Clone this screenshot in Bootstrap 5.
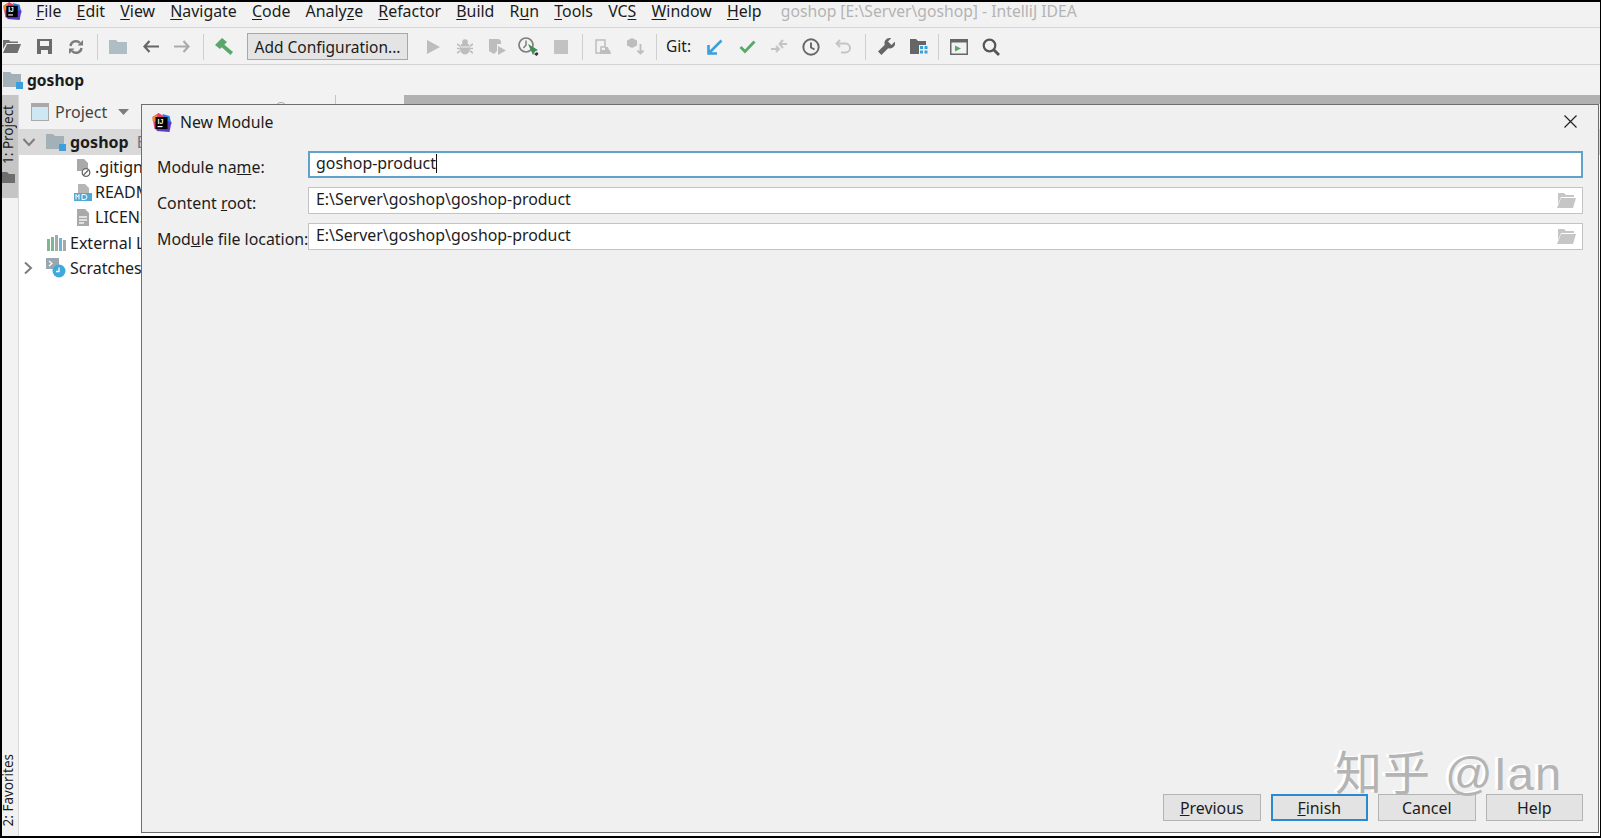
<!DOCTYPE html>
<html lang="en">
<head>
<meta charset="utf-8">
<title>goshop - IntelliJ IDEA</title>
<link href="https://cdn.jsdelivr.net/npm/bootstrap@5.3.0/dist/css/bootstrap.min.css" rel="stylesheet">
<style>
html,body{height:100%;overflow:hidden}
body{background:#000;font-family:"Noto Sans","Open Sans",sans-serif;font-size:16px;color:#1c1c1c;padding:2px 1px 2px 2px}
.ide{width:1598px;height:834px;background:#f2f2f2;position:relative;display:flex;flex-direction:column}
.menubar{height:26px;flex:none;border-bottom:1px solid #d6d6d6;gap:15.2px;font-size:15.9px;line-height:19px;padding-bottom:6px}
.logo-slot{width:34px;margin-right:-15.2px}
.menu-item{white-space:nowrap;color:#1c1c1c}
.menu-item u{text-underline-offset:2px;text-decoration-thickness:1px}
.win-title{color:#b4b4b4;margin-left:4px;font-size:15.7px}
.toolbar{height:37px;border-bottom:1px solid #d3d3d3;padding-top:1px;flex:none}
.tb-icon{width:32px;height:35px;display:flex;align-items:center;justify-content:center;flex:none}
.tb-icon.first{margin-left:-6px}
.tb-icon svg{display:block}
.tb-sep{width:1px;height:26px;background:#cfcfcf;flex:none;margin:0 4.5px}
.tb-sep.far{margin-left:6px}
.tb-sep.near{margin:0 3.5px}
.cfg-btn{height:27px;width:161px;border:1px solid #a8a8a8;background:#e4e4e4;border-radius:0;font-size:15.5px;line-height:24px;padding:0;color:#1c1c1c;margin:0 9px 0 7px;flex:none}
.git-label{width:32px;margin:0 1px 0 5px;font-size:15.5px;flex:none}
.navstrip{height:30px;flex:none;padding:1px 0 0 1px;font-weight:700;font-size:15.6px;gap:4px}
.workbench{flex:1;min-height:0;display:flex}
.side-rail{width:17px;flex:none;border-right:1px solid #d9d9d9;display:flex;flex-direction:column;justify-content:space-between;font-size:13.5px}
.rail-active{background:#c5c5c5;height:103px;display:flex;flex-direction:column;align-items:center;padding:10px 3px 0 0}
.rail-text{writing-mode:vertical-rl;transform:rotate(180deg);line-height:13px;white-space:nowrap}
.rail-fav{padding:0 3px 10px 0;display:flex;justify-content:center}
.tool-pane{flex:1;display:flex;flex-direction:column;min-width:0}
.pane-top{height:34px;flex:none;display:flex}
.pane-head{width:385px;position:relative;padding-left:12px;padding-bottom:1px;gap:6px;color:#444}
.pane-tick{position:absolute;left:316px;top:0;width:1px;height:9px;background:#c4c4c4}
.pane-arc{position:absolute;left:256px;top:7px;width:12px;height:12px;border-radius:50%;border:1px solid #a8a8a8}
.pane-grey{flex:1;background:#b1b1b1;height:9px}
.tree{flex:1;background:#fff;font-size:16px}
.tree-row{height:25px;white-space:nowrap;padding-left:27px;gap:4px}
.tree-row.sel{height:26px;background:#d9d9d9;font-weight:700}
.tree-row.indent{padding-left:55px;gap:3px}
.tree-row.indent span{position:relative;top:-1px}
.tree-chev{position:absolute}
.dlg{position:absolute;left:139px;top:102px;width:1458px;height:729px;background:#f0f0f0;border:1px solid #6e6e6e;display:flex;flex-direction:column}
.dlg-head{height:36px;padding:0 21px 0 9px;gap:8px;font-size:15.8px;flex:none}
.dlg-close{background:none;border:0;padding:0 0 3px;line-height:0}
.dlg-body{flex:1;padding:10px 15px 0 15px;display:flex;flex-direction:column;gap:9px}
.field-label{width:151px;flex:none;padding-top:6px;font-size:15.9px;white-space:nowrap;line-height:21px}
.field-box{position:relative;flex:1;height:27px;border:1px solid #c3c3c3;border-radius:0;padding:0 7px;font-size:15.9px;line-height:23px;background:#fff;color:#1c1c1c;box-shadow:none}
.field-box.on{border:2px solid #5fa3cb;padding:0 6px;line-height:21px}
.caret-bar{display:inline-block;width:1px;height:19px;background:#111;vertical-align:-4px}
.field-box svg{position:absolute;right:6px;top:5px}
.dlg-foot{padding:0 15px 11px 0;gap:10px;justify-content:flex-end}
.dlg-btn{width:97.5px;height:27px;border:1px solid #b4b4b4;border-radius:0;background:#e3e3e3;padding:0;font-size:15.9px;line-height:24px;color:#1c1c1c}
.dlg-btn.dflt{border:2px solid #2a8acb;line-height:22px}
.wmark{position:absolute;left:1333px;top:744px;font-size:47px;line-height:56px;color:#b4b4b4;font-family:"Liberation Sans","Noto Sans CJK SC",sans-serif;text-shadow:-3px -1px 0 #fff;white-space:nowrap;letter-spacing:1px;pointer-events:none}
</style>
</head>
<body>
<div class="ide">
  <div class="menubar d-flex align-items-center">
    <div class="logo-slot d-flex align-items-center">
      <svg width="20" height="19" viewBox="0 0 20 20"><path d="M1 4 7 0 12 3 8 18 3 16Z" fill="#e23f6e"/><path d="M1 4 6 1 5 9 1 8Z" fill="#f08a3a"/><path d="M11 1 18 3 20 11 14 14Z" fill="#2a7de1"/><path d="M8 8 20 9 18 19 5 18Z" fill="#5a3bc4"/><rect x="4" y="4" width="12" height="12" fill="#000"/><text x="6" y="11" font-size="7" font-weight="700" fill="#fff" font-family="Liberation Sans">IJ</text><rect x="6" y="13" width="5" height="1.200" fill="#fff"/></svg>
    </div>
    <span class="menu-item"><u>F</u>ile</span>
    <span class="menu-item"><u>E</u>dit</span>
    <span class="menu-item"><u>V</u>iew</span>
    <span class="menu-item"><u>N</u>avigate</span>
    <span class="menu-item"><u>C</u>ode</span>
    <span class="menu-item">Analy<u>z</u>e</span>
    <span class="menu-item"><u>R</u>efactor</span>
    <span class="menu-item"><u>B</u>uild</span>
    <span class="menu-item">R<u>u</u>n</span>
    <span class="menu-item"><u>T</u>ools</span>
    <span class="menu-item">VC<u>S</u></span>
    <span class="menu-item"><u>W</u>indow</span>
    <span class="menu-item"><u>H</u>elp</span>
    <span class="menu-item win-title">goshop [E:\Server\goshop] - IntelliJ IDEA</span>
  </div>
  <div class="toolbar d-flex align-items-center">
    <span class="tb-icon first"><svg width="18" height="13" viewBox="0 0 18 13"><path d="M0 0h6l1.500 1.500H15V3H3.500L0 9Z" fill="#707070"/><path d="M4 4h14l-3.500 9H0Z" fill="#707070"/></svg></span>
    <span class="tb-icon"><svg width="15" height="15" viewBox="0 0 15 15"><path fill-rule="evenodd" d="M0 0h15v15H0ZM3 2v5h9V2ZM4 11v4h7v-4Z" fill="#6b6b6b"/></svg></span>
    <span class="tb-icon"><svg width="16" height="16" viewBox="0 0 16 16"><path d="M2.500 7a5.500 5.500 0 0 1 9.500-3M13.500 9a5.500 5.500 0 0 1-9.500 3" fill="none" stroke="#7b7b7b" stroke-width="2.400"/><path d="M15 1v5.500H9.500ZM1 15V9.500h5.500Z" fill="#7b7b7b"/></svg></span>
    <span class="tb-sep"></span>
    <span class="tb-icon"><svg width="18" height="14" viewBox="0 0 18 14"><path d="M0 0h7l2 2h9v12H0Z" fill="#afbdc4"/></svg></span>
    <span class="tb-icon"><svg width="17" height="13" viewBox="0 0 17 13"><path d="M17 6.500H3M7.500 1 2.500 6.500 7.500 12" fill="none" stroke="#666" stroke-width="2.200"/></svg></span>
    <span class="tb-icon"><svg width="17" height="13" viewBox="0 0 17 13"><path d="M0 6.500h14M9.500 1l5 5.500-5 5.500" fill="none" stroke="#ababab" stroke-width="2.200"/></svg></span>
    <span class="tb-sep"></span>
    <span class="tb-icon"><svg width="19" height="17" viewBox="0 0 19 17"><path d="M0 7 7 0l5 4-7 7Z" fill="#59a869"/><path d="M5 3l13 11-2.500 3L3 6Z" fill="#59a869"/></svg></span>
    <button type="button" class="btn cfg-btn">Add Configuration...</button>
    <span class="tb-icon"><svg width="13" height="14" viewBox="0 0 13 14"><path d="M0 0 13 7 0 14Z" fill="#bdbdbd"/></svg></span>
    <span class="tb-icon"><svg width="16" height="16" viewBox="0 0 16 16"><ellipse cx="8" cy="9.500" rx="5" ry="6" fill="#bdbdbd"/><circle cx="8" cy="3" r="2.800" fill="#bdbdbd"/><path d="M0 5l3 2M16 5l-3 2M0 9.500h3M16 9.500h-3M0 14l3-2M16 14l-3-2" stroke="#bdbdbd" stroke-width="1.600"/><path d="M4 8h8" stroke="#f2f2f2"/></svg></span>
    <span class="tb-icon"><svg width="17" height="16" viewBox="0 0 17 16"><path d="M0 0h10l2 2v3H8v7l-3 3-5-3Z" fill="#bdbdbd"/><path d="M9 7l8 4.500L9 16Z" fill="#bdbdbd"/></svg></span>
    <span class="tb-icon"><svg width="22" height="20" viewBox="0 0 22 20"><circle cx="8" cy="8" r="7" fill="none" stroke="#7f7f7f" stroke-width="1.700"/><path d="M8 3.500V8l-2.500 3" fill="none" stroke="#7f7f7f" stroke-width="1.500"/><path d="M10 7l10 6-3 1.500L15 18Z" fill="#3f8f55"/><path d="M16 17l3-2 1.500 2-2 2Z" fill="#333"/></svg></span>
    <span class="tb-icon"><svg width="14" height="14" viewBox="0 0 14 14"><rect width="14" height="14" fill="#c2c2c2"/></svg></span>
    <span class="tb-sep"></span>
    <span class="tb-icon"><svg width="16" height="16" viewBox="0 0 16 16"><path d="M1 1h9v7H6v6H1Z" fill="none" stroke="#bdbdbd" stroke-width="1.500"/><path d="M5 11h10l1 4H5ZM10 8h3l1 3h-4Z" fill="#bdbdbd"/></svg></span>
    <span class="tb-icon"><svg width="19" height="17" viewBox="0 0 19 17"><path d="M6 0l5 2.500v5L6 10 1 7.500v-5Z" fill="#bdbdbd"/><path d="M14.500 6v9M11.500 12.500l3 3 3-3" fill="none" stroke="#bdbdbd" stroke-width="1.800"/></svg></span>
    <span class="tb-sep"></span>
    <span class="git-label">Git:</span>
    <span class="tb-icon"><svg width="16" height="16" viewBox="0 0 16 16"><path d="M14.500 1.500 3 13M1.500 6v8.500H10" fill="none" stroke="#3b9fdb" stroke-width="2.600"/></svg></span>
    <span class="tb-icon"><svg width="17" height="14" viewBox="0 0 17 14"><path d="M1.500 7 6 11.500 15.500 1.500" fill="none" stroke="#59a869" stroke-width="2.800"/></svg></span>
    <span class="tb-icon"><svg width="18" height="17" viewBox="0 0 18 17"><path d="M1 11h7M6 8l3 3-3 3M17 6h-6M13 2 9.500 6 13 10" fill="none" stroke="#c4c4c4" stroke-width="2"/></svg></span>
    <span class="tb-icon"><svg width="18" height="18" viewBox="0 0 18 18"><circle cx="9" cy="9" r="7.700" fill="none" stroke="#666" stroke-width="1.900"/><path d="M9 4.500V9.500l3.500 2" fill="none" stroke="#666" stroke-width="1.900"/></svg></span>
    <span class="tb-icon"><svg width="16" height="16" viewBox="0 0 16 16"><path d="M5 1 1.500 4.500 5 8M2 4.500h8.500a4.500 4.500 0 0 1 0 9H6" fill="none" stroke="#c4c4c4" stroke-width="1.900"/></svg></span>
    <span class="tb-sep far"></span>
    <span class="tb-icon"><svg width="17" height="17" viewBox="0 0 17 17"><path d="M11.500 0a5 5 0 0 0-4.700 6.800L0 13.600 3.400 17l6.800-6.800A5 5 0 0 0 16.700 3.800L13.500 7 10 3.500 13.200.300A5 5 0 0 0 11.500 0Z" fill="#666"/></svg></span>
    <span class="tb-icon"><svg width="18" height="15" viewBox="0 0 18 15"><path d="M0 0h6l2 2h8v4H9v9H0Z" fill="#666"/><path d="M10 7h3v3h-3ZM14.500 7h3v3h-3ZM10 11.500h3v3h-3ZM14.500 11.500h3v3h-3Z" fill="#3b9fdb"/></svg></span>
    <span class="tb-sep near"></span>
    <span class="tb-icon"><svg width="18" height="16" viewBox="0 0 18 16"><rect x=".750" y=".750" width="16.500" height="14.500" fill="#f2f2f2" stroke="#666" stroke-width="1.500"/><rect width="18" height="3.500" fill="#666"/><path d="M5 6.500l6 3-6 3Z" fill="#59a869"/></svg></span>
    <span class="tb-icon"><svg width="18" height="18" viewBox="0 0 18 18"><circle cx="7.500" cy="7.500" r="5.800" fill="none" stroke="#555" stroke-width="2.200"/><path d="M11.500 11.500 17 17" stroke="#555" stroke-width="2.800"/></svg></span>
  </div>
  <div class="navstrip d-flex align-items-center">
    <svg width="20" height="17" viewBox="0 0 20 17"><path d="M0 0h7l2 2h9v13H0Z" fill="#a4b0b8"/><rect x="13" y="10" width="7" height="7" fill="#3b9fdb"/></svg>
    <span>goshop</span>
  </div>
  <div class="workbench">
    <div class="side-rail">
      <div class="rail-active">
        <span class="rail-text">1: Project</span>
        <svg class="mt-2" width="13" height="11" viewBox="0 0 13 11"><path d="M0 0h5l2 2h6v9H0Z" fill="#6d6d6d"/></svg>
      </div>
      <div class="rail-fav"><span class="rail-text">2: Favorites</span></div>
    </div>
    <div class="tool-pane">
      <div class="pane-top">
        <div class="pane-head d-flex align-items-center">
          <svg width="18" height="18" viewBox="0 0 18 18"><rect x=".500" y=".500" width="17" height="17" fill="#cfe6f3" stroke="#a9a9a9"/><rect x="1" y="1" width="16" height="3" fill="#a9a9a9"/></svg>
          <span>Project</span>
          <svg class="ms-1" width="13" height="8" viewBox="0 0 13 8"><path d="M1 1h11L6.500 7Z" fill="#7d7d7d"/></svg>
          <span class="pane-arc"></span>
          <span class="pane-tick"></span>
        </div>
        <div class="pane-grey"></div>
      </div>
      <div class="tree">
        <div class="tree-row sel d-flex align-items-center position-relative">
          <svg class="tree-chev" style="left:3px" width="14" height="9" viewBox="0 0 14 9"><path d="M1.500 1 7 7l5.500-6" fill="none" stroke="#7d7d7d" stroke-width="2"/></svg>
          <svg width="20" height="17" viewBox="0 0 20 17"><path d="M0 0h7l2 2h9v13H0Z" fill="#a4b0b8"/><rect x="13" y="10" width="7" height="7" fill="#3b9fdb"/></svg>
          <span>goshop</span><span class="fw-normal text-secondary ms-1">E:\Server\goshop</span>
        </div>
        <div class="tree-row indent d-flex align-items-center"><svg width="18" height="19" viewBox="0 0 18 19"><path d="M3 1h7l4 4v8H3Z" fill="#a9a9a9"/><circle cx="12" cy="14.500" r="3.800" fill="#fff" stroke="#666" stroke-width="1.300"/><path d="M9.500 17 14.500 12" stroke="#666" stroke-width="1.300"/></svg><span>.gitignore</span></div>
        <div class="tree-row indent d-flex align-items-center"><svg width="18" height="19" viewBox="0 0 18 19"><path d="M4 1h7l4 4v6H4Z" fill="#b5b5b5"/><rect x="0" y="10" width="18" height="8" fill="#53a7d4"/><path d="M2 16.500v-5l1.500 2.500L5 11.500v5M8 11.500v5h2q3 0 3-2.500t-3-2.500Z" fill="none" stroke="#fff" stroke-width="1"/></svg><span>README.md</span></div>
        <div class="tree-row indent d-flex align-items-center"><svg width="18" height="19" viewBox="0 0 18 19"><path d="M3 1h8l4 4v13H3Z" fill="#a9a9a9"/><path d="M5 9h8M5 12h8M5 15h5" stroke="#f2f2f2" stroke-width="1.300"/></svg><span>LICENSE</span></div>
        <div class="tree-row d-flex align-items-center"><svg width="20" height="16" viewBox="0 0 20 16"><path d="M1 4h3v12H1ZM5 2h3v14H5Z" fill="#7fb58f"/><path d="M9 0h3v16H9Z" fill="#a9a9a9"/><path d="M13 3h3v13h-3Z" fill="#6fb2da"/><path d="M17 5h3v11h-3Z" fill="#a9a9a9"/></svg><span>External Libraries</span></div>
        <div class="tree-row d-flex align-items-center position-relative">
          <svg class="tree-chev" style="left:5px" width="9" height="14" viewBox="0 0 9 14"><path d="M1 1.500 7 7l-6 5.500" fill="none" stroke="#7d7d7d" stroke-width="2"/></svg>
          <svg width="20" height="20" viewBox="0 0 20 20"><rect x="0" y="0" width="13" height="11" fill="#9aa7b0"/><path d="M3 3l3 2.500L3 8" fill="none" stroke="#fff" stroke-width="1.200"/><circle cx="13" cy="13" r="6.500" fill="#3fa9dc"/><path d="M13 9.500V13.500h-3" fill="none" stroke="#fff" stroke-width="1.300"/></svg>
          <span>Scratches and Consoles</span>
        </div>
      </div>
    </div>
  </div>
  <div class="dlg" role="dialog">
    <div class="dlg-head d-flex align-items-center">
      <svg width="21" height="20" viewBox="0 0 20 20"><path d="M1 4 7 0 12 3 8 18 3 16Z" fill="#e23f6e"/><path d="M1 4 6 1 5 9 1 8Z" fill="#f08a3a"/><path d="M11 1 18 3 20 11 14 14Z" fill="#2a7de1"/><path d="M8 8 20 9 18 19 5 18Z" fill="#5a3bc4"/><rect x="4" y="4" width="12" height="12" fill="#000"/><text x="6" y="11" font-size="7" font-weight="700" fill="#fff" font-family="Liberation Sans">IJ</text><rect x="6" y="13" width="5" height="1.200" fill="#fff"/></svg>
      <span class="flex-grow-1">New Module</span>
      <button type="button" class="dlg-close" aria-label="Close"><svg width="13" height="13" viewBox="0 0 13 13"><path d="M.5.500 12.500 12.500M12.500.500.500 12.500" stroke="#222" stroke-width="1.200"/></svg></button>
    </div>
    <div class="dlg-body">
      <div class="d-flex">
        <div class="field-label">Module na<u>m</u>e:</div>
        <div class="form-control field-box on">goshop-product<span class="caret-bar"></span></div>
      </div>
      <div class="d-flex">
        <div class="field-label">Content <u>r</u>oot:</div>
        <div class="form-control field-box">E:\Server\goshop\goshop-product<svg width="19" height="15" viewBox="0 0 19 15"><path d="M1 0h6l2 2h8v2H4L1 11Z" fill="#c6c6c6"/><path d="M4 5h15l-3 10H0Z" fill="#c6c6c6"/></svg></div>
      </div>
      <div class="d-flex">
        <div class="field-label">Mod<u>u</u>le file location:</div>
        <div class="form-control field-box">E:\Server\goshop\goshop-product<svg width="19" height="15" viewBox="0 0 19 15"><path d="M1 0h6l2 2h8v2H4L1 11Z" fill="#c6c6c6"/><path d="M4 5h15l-3 10H0Z" fill="#c6c6c6"/></svg></div>
      </div>
    </div>
    <div class="dlg-foot d-flex">
      <button type="button" class="btn dlg-btn"><u>P</u>revious</button>
      <button type="button" class="btn dlg-btn dflt"><u>F</u>inish</button>
      <button type="button" class="btn dlg-btn">Cancel</button>
      <button type="button" class="btn dlg-btn">Help</button>
    </div>
  </div>
  <div class="wmark">知乎 @Ian</div>
</div>
<script src="https://cdn.jsdelivr.net/npm/bootstrap@5.3.0/dist/js/bootstrap.bundle.min.js"></script>
</body>
</html>
